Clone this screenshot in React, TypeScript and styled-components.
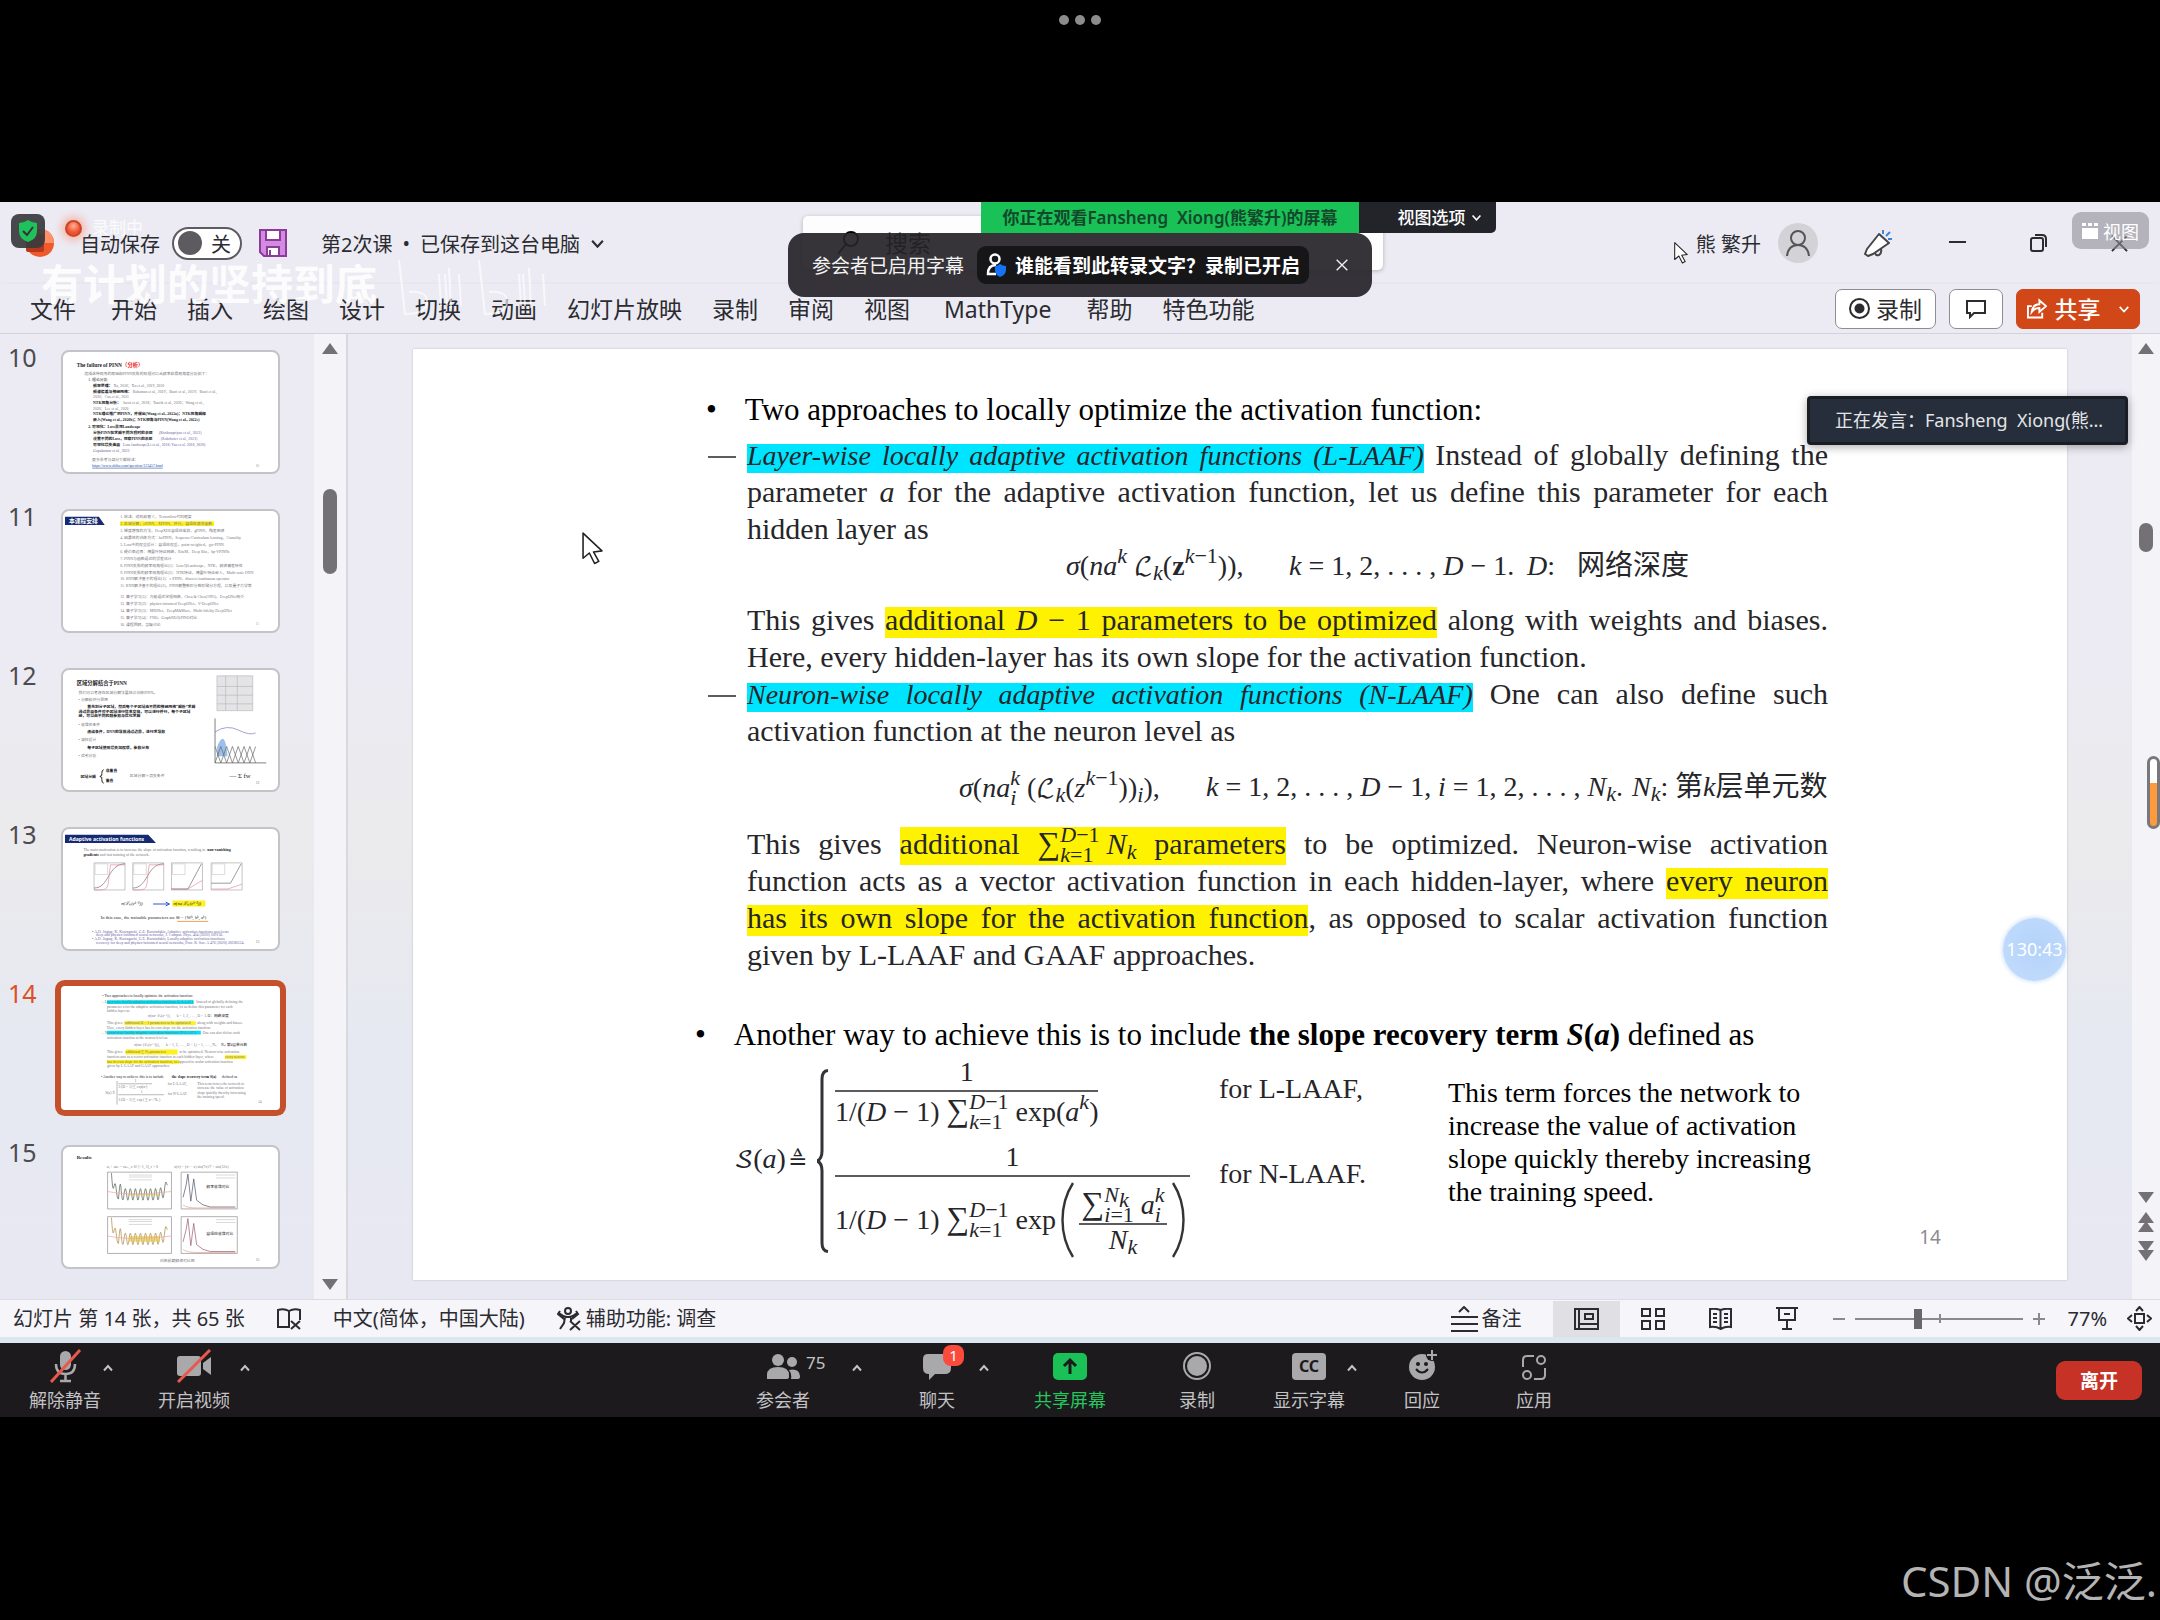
import React from "react";
import styled, { createGlobalStyle, css } from "styled-components";

const SANS = `"Noto Sans", "Noto Sans CJK SC", sans-serif`;
const SERIF = `"Liberation Serif", "Noto Sans CJK SC", serif`;
const INK = "#2b2b30";

const Global = createGlobalStyle`
  * { box-sizing: border-box; }
  body { margin: 0; background: #000; font-family: ${SANS}; color: ${INK}; }
  button { font: inherit; color: inherit; border: 0; padding: 0; background: none; cursor: pointer; }
  svg { display: block; }
`;

/* ---------- page shell ---------- */

const Screen = styled.main`
  position: relative;
  display: flex;
  flex-direction: column;
  min-height: 100vh;
  background: #000;
  overflow: hidden;
`;

const Notch = styled.div`
  display: flex;
  justify-content: center;
  gap: 6px;
  height: 202px;
  padding-top: 15px;
`;

const NotchDot = styled.i`
  width: 10px;
  height: 10px;
  border-radius: 50%;
  background: #8c8c8c;
`;

const Shared = styled.section`
  position: relative;
  display: flex;
  flex-direction: column;
  background: #ecebf4;
`;

/* ---------- title bar ---------- */

const TitleBar = styled.header`
  display: flex;
  align-items: center;
  height: 82px;
  padding: 0 32px 0 26px;
  font-size: 20px;
  white-space: nowrap;
`;

const AutoSave = styled.label`
  display: flex;
  align-items: center;
  gap: 12px;
  margin-left: 26px;
`;

const SwitchBox = styled.span`
  display: flex;
  align-items: center;
  justify-content: space-between;
  width: 70px;
  height: 33px;
  padding: 0 9px 0 4px;
  border: 2px solid #5d5b60;
  border-radius: 17px;
  background: #fff;
`;

const SwitchInput = styled.input`
  appearance: none;
  width: 24px;
  height: 24px;
  margin: 0;
  border-radius: 50%;
  background: #5d5b60;
`;

const SaveButton = styled.button`
  margin-left: 17px;
`;

const DocButton = styled.button`
  display: flex;
  align-items: center;
  gap: 10px;
  margin-left: 34px;
`;

const SearchBox = styled.label`
  display: flex;
  align-items: center;
  gap: 24px;
  width: 580px;
  height: 54px;
  margin-left: 198px;
  padding-left: 34px;
  border-radius: 5px;
  background: #fdfdfe;
  box-shadow: 0 1px 4px #00000040;
`;

const SearchInput = styled.input`
  flex: 1;
  min-width: 0;
  border: 0;
  background: none;
  font: 23px ${SANS};
  &::placeholder { color: #000; opacity: 1; }
`;

const WindowTools = styled.div`
  display: flex;
  align-items: center;
  margin-left: auto;
`;

const Avatar = styled.span`
  display: grid;
  place-items: center;
  width: 40px;
  height: 40px;
  margin: 0 46px 0 17px;
  border-radius: 50%;
  background: #d3d2d6;
`;

const WindowButtons = styled.div`
  display: flex;
  align-items: center;
  gap: 64px;
  margin-left: 57px;
`;

/* ---------- ribbon ---------- */

const Ribbon = styled.nav`
  display: flex;
  align-items: center;
  height: 50px;
  padding: 0 20px 0 30px;
  font-size: 23px;
  line-height: 30px;
  white-space: nowrap;
  border-bottom: 1px solid #d3d2da;
  box-shadow: 0 2px 6px #00000018;
`;

const Tabs = styled.div`
  display: flex;
  gap: 30px;
`;

const Tab = styled.button<{ $first?: boolean; $latin?: boolean }>`
  margin: 0 ${(p) => (p.$first || p.$latin ? 5 : 0)}px 0 ${(p) => (p.$latin ? 4 : 0)}px;
`;

const RibbonActions = styled.div`
  display: flex;
  gap: 13px;
  margin-left: auto;
`;

const RibbonButton = styled.button<{ $share?: boolean }>`
  display: flex;
  align-items: center;
  justify-content: center;
  gap: ${(p) => (p.$share ? 8 : 6)}px;
  width: ${(p) => (p.$share ? 124 : 101)}px;
  height: 40px;
  border: 1px solid ${(p) => (p.$share ? "#d24718" : "#8f8d93")};
  border-radius: 7px;
  color: ${(p) => (p.$share ? "#fff" : INK)};
  background: ${(p) => (p.$share ? "#d24718" : "#fff")};
  font-weight: ${(p) => (p.$share ? 500 : 400)};
`;

const CommentButton = styled(RibbonButton)`
  width: 54px;
`;

const ShareCaret = styled.span`
  margin-left: 9px;
`;

/* ---------- floating meeting overlays ---------- */

const Viewing = styled.div`
  position: absolute;
  top: 0;
  left: calc(50% - 99px);
  display: flex;
  height: 31px;
  font-size: 17px;
  line-height: 31px;
  white-space: nowrap;
`;

const ViewingName = styled.div`
  width: 378px;
  text-align: center;
  color: #14482b;
  font-weight: 600;
  background: #19c157;
`;

const ViewingOptions = styled.button`
  display: flex;
  align-items: center;
  justify-content: center;
  gap: 5px;
  width: 137px;
  padding-left: 24px;
  border-radius: 0 0 5px 0;
  color: #fff;
  font-weight: 500;
  background: #23242a;
`;

const Toast = styled.div`
  position: absolute;
  top: 31px;
  left: 50%;
  display: flex;
  align-items: center;
  width: 584px;
  height: 64px;
  padding: 0 24px;
  border-radius: 16px;
  color: #f2f2f2;
  background: #262429ec;
  font-size: 19px;
  white-space: nowrap;
  transform: translateX(-50%);
`;

const ToastPill = styled.button`
  display: flex;
  align-items: center;
  gap: 9px;
  height: 38px;
  margin-left: 13px;
  padding: 0 9px;
  border-radius: 9px;
  background: #161618;
  color: #fff;
  font-weight: 700;
`;

const ToastClose = styled.button`
  margin-left: auto;
`;

const Shield = styled.div`
  position: absolute;
  top: 12px;
  left: 11px;
  display: grid;
  place-items: center;
  width: 34px;
  height: 34px;
  border-radius: 8px;
  background: #3c3b3fee;
`;

const Recording = styled.div`
  position: absolute;
  top: 16px;
  left: 65px;
  display: flex;
  align-items: center;
  gap: 10px;
  color: #ffffffd0;
  font-size: 17px;
  line-height: 20px;
`;

const RecordingLight = styled.i`
  width: 17px;
  height: 17px;
  border: 2px solid #c8452a;
  border-radius: 50%;
  background: radial-gradient(circle at 50% 30%, #ffb09a, #f0512e 60%);
  box-shadow: 0 0 8px 3px #ff8e6a99;
`;

const Motto = styled.div`
  position: absolute;
  top: 54px;
  left: 41px;
  display: flex;
  gap: 20px;
  color: #ffffffe0;
  font-size: 42px;
  font-weight: 700;
  line-height: 56px;
  pointer-events: none;
`;

const ViewBadge = styled.button`
  position: absolute;
  top: 10px;
  right: 11px;
  display: flex;
  align-items: center;
  gap: 5px;
  height: 37px;
  padding: 0 10px;
  border-radius: 9px;
  color: #fff;
  background: #8f8e9499;
  font-size: 18px;
`;

const Pointer = styled.div<{ $x: string; $y: number; $w: number }>`
  position: absolute;
  left: ${(p) => p.$x};
  top: ${(p) => p.$y}px;
  width: ${(p) => p.$w}px;
`;

const Speaking = styled.div`
  position: absolute;
  top: 194px;
  right: 32px;
  width: 321px;
  height: 49px;
  padding-left: 25px;
  border: 3px solid #1a1d23;
  border-radius: 4px;
  color: #e3e5e8;
  background: #262e3b;
  box-shadow: 0 2px 10px #0005;
  font-size: 18px;
  line-height: 43px;
  white-space: pre;
`;

const Timer = styled.div`
  position: absolute;
  top: 716px;
  right: 94px;
  width: 63px;
  height: 63px;
  border-radius: 50%;
  color: #fff;
  background: radial-gradient(circle at 55% 45%, #b4d2fa, #c3ddfc);
  box-shadow: 0 0 5px #b9d4f7;
  font-size: 18px;
  line-height: 62px;
  text-align: center;
`;

const EdgeHandle = styled.div`
  position: absolute;
  top: 554px;
  right: 0;
  width: 13px;
  height: 73px;
  border: 3px solid #77777c;
  border-radius: 8px;
  background: linear-gradient(#fff 36%, #fc9a3f 36%);
`;

/* ---------- workspace ---------- */

const Workspace = styled.div`
  display: flex;
  height: 965px;
  background: linear-gradient(#ecebf4, #ecebf3 35%, #ebeaec 52%, #e6e9f2 75%, #e8e8f2);
`;

const ThumbList = styled.ol`
  display: flex;
  flex-direction: column;
  gap: 35px;
  width: 314px;
  margin: 0;
  padding: 16px 0 0 8px;
  list-style: none;
  overflow: hidden;
`;

const ThumbItem = styled.li<{ $active?: boolean }>`
  display: flex;
  color: ${(p) => (p.$active ? "#dd4f27" : "#4c4b50")};
  font-size: 25px;
  line-height: 14px;
`;

const ThumbNumber = styled.span`
  width: 53px;
`;

const ThumbButton = styled.button<{ $active?: boolean }>`
  width: 219px;
  height: 124px;
  border: 2px solid #c4c3c8;
  border-radius: 8px;
  background: #fff;
  overflow: hidden;
  ${(p) =>
    p.$active &&
    css`
      border-color: #fff;
      border-radius: 4px;
      box-shadow: 0 0 0 6px #c5502c;
    `}
  svg { width: 100%; height: 100%; }
`;

const Track = styled.div<{ $wide?: boolean }>`
  display: flex;
  flex-direction: column;
  align-items: center;
  width: ${(p) => (p.$wide ? 34 : 28)}px;
  padding: 9px 0 ${(p) => (p.$wide ? 9 : 38)}px;
  background: #f4f3f8;
  border-right: ${(p) => (p.$wide ? "2px solid #d9d8de" : "0")};
`;

const TrackThumb = styled.div<{ $top: number; $h: number }>`
  width: 14px;
  height: ${(p) => p.$h}px;
  margin-top: ${(p) => p.$top}px;
  border-radius: 7px;
  background: #737176;
`;

const TrackEnd = styled.div`
  display: flex;
  flex-direction: column;
  gap: 9px;
  margin-top: auto;
`;

const Stage = styled.div`
  flex: 1;
  min-width: 0;
  padding: 15px 65px 19px;
`;

/* ---------- the slide ---------- */

const SlideSheet = styled.article`
  min-height: 931px;
  padding: 42px 0 0 288px;
  color: #26262a;
  background: #fff;
  box-shadow: 0 0 2px #0003;
  font-family: ${SERIF};
  font-size: 28px;
  line-height: 37px;
  white-space: nowrap;
`;

const Bullet = styled.h2<{ $second?: boolean }>`
  display: flex;
  gap: 28px;
  margin: ${(p) => (p.$second ? "43px 0 0 -6px" : "0 0 8px 5px")};
  color: #000;
  font-size: 31px;
  font-weight: 400;
  &::before { content: "•"; }
`;

const Block = styled.div<{ $before?: number }>`
  margin: ${(p) => p.$before ?? 0}px 239px 0 46px;
  font-size: 30px;
`;

const Line = styled.p<{ $dash?: boolean; $end?: boolean }>`
  position: relative;
  height: 37px;
  margin: 0;
  text-align-last: ${(p) => (p.$end ? "left" : "justify")};
  ${(p) =>
    p.$dash &&
    css`
      &::before {
        content: "";
        position: absolute;
        left: -39px;
        top: 20px;
        width: 28px;
        height: 2px;
        background: #5c5c60;
      }
    `}
`;

const Mark = styled.mark<{ $blue?: boolean; $tall?: boolean }>`
  padding-bottom: ${(p) => (p.$tall ? 5 : 2)}px;
  color: inherit;
  font-size: ${(p) => (p.$blue ? 28 : 30)}px;
  font-style: ${(p) => (p.$blue ? "italic" : "normal")};
  background: linear-gradient(
    transparent ${(p) => (p.$tall ? 0 : 4)}px,
    ${(p) => (p.$blue ? "#00e5ff" : "#fff200")} ${(p) => (p.$tall ? 0 : 4)}px
  );
`;

const Formula = styled.div<{ $cols: string; $left: number; $before?: number }>`
  display: grid;
  grid-template-columns: ${(p) => p.$cols};
  height: 37px;
  margin: ${(p) => p.$before ?? 0}px 0 0 ${(p) => p.$left}px;
`;

const Sup = styled.sup`
  font-size: 22px;
  line-height: 0;
  vertical-align: 12px;
`;

const Sub = styled.sub`
  font-size: 22px;
  font-style: italic;
  line-height: 0;
  vertical-align: -5px;
`;

const Limits = styled.span<{ $gap?: boolean }>`
  display: inline-grid;
  margin-right: ${(p) => (p.$gap ? 7 : 0)}px;
  font-size: 22px;
  line-height: 20px;
  text-align-last: left;
  vertical-align: 12px;
`;

const Sigma = styled.span`
  font-size: 32px;
  line-height: 0;
`;

const Script = styled.span`
  font-family: "DejaVu Math TeX Gyre", "DejaVu Serif", serif;
  font-size: 25px;
  line-height: 0;
`;

const Cases = styled.div`
  display: grid;
  grid-template-columns: 83px 18px 384px 229px auto;
  margin-left: 33px;
`;

const CasesName = styled.div`
  align-self: center;
`;

const Equals = styled(Script)`
  margin-left: 3px;
  font-size: 23px;
`;

const Brace = styled.svg`
  width: 12px;
  height: 184px;
  margin-top: 16px;
`;

const CasesBody = styled.div`
  display: flex;
  flex-direction: column;
  align-items: flex-start;
  gap: 6px;
`;

const Fraction = styled.div<{ $inner?: boolean }>`
  display: flex;
  flex-direction: column;
  min-width: ${(p) => (p.$inner ? 88 : 0)}px;
  text-align: center;
  line-height: ${(p) => (p.$inner ? 30 : 37)}px;
`;

const Denominator = styled.div<{ $tall?: boolean }>`
  display: flex;
  align-items: center;
  height: ${(p) => (p.$tall ? 88 : 42)}px;
  border-top: 2px solid #5c5c60;
`;

const InnerTop = styled.div`
  height: 40px;
  line-height: 36px;
  border-bottom: 2px solid #5c5c60;
`;

const Paren = styled.svg`
  width: 13px;
  height: 76px;
  margin: 0 5px;
`;

const Conditions = styled.div`
  display: flex;
  flex-direction: column;
  gap: 48px;
  padding-top: 17px;
`;

const Note = styled.p`
  margin: 23px 0 0;
  color: #000;
  line-height: 33px;
`;

const PageNumber = styled.div`
  position: absolute;
  top: 1022px;
  right: 219px;
  color: #8b8b8f;
  font-size: 19px;
  line-height: 26px;
`;

/* ---------- status bar ---------- */

const StatusBar = styled.footer`
  display: flex;
  align-items: center;
  height: 44px;
  padding: 0 8px 0 13px;
  border-top: 1px solid #dcdbe2;
  border-bottom: 6px solid #dbe6f0;
  background: #f6f5fa;
  font-size: 20px;
  line-height: 28px;
  white-space: nowrap;
`;

const StatusGroup = styled.div`
  display: flex;
  align-items: center;
  gap: 32px;
`;

const IconLabel = styled.button<{ $notes?: boolean }>`
  display: flex;
  align-items: center;
  gap: 4px;
  margin-right: ${(p) => (p.$notes ? 31 : 0)}px;
`;

const StatusRight = styled.div`
  display: flex;
  align-items: center;
  margin-left: auto;
`;

const ViewButton = styled.button<{ $on?: boolean }>`
  display: grid;
  place-items: center;
  width: 67px;
  height: 36px;
  background: ${(p) => (p.$on ? "#e0dfe4" : "none")};
`;

const ZoomControl = styled.div`
  display: flex;
  align-items: center;
  gap: 10px;
  margin-left: 12px;
  color: #8a898f;
`;

const ZoomSlider = styled.input`
  appearance: none;
  width: 168px;
  height: 20px;
  margin: 0;
  background:
    linear-gradient(#8a898f, #8a898f) 84px 50% / 2px 9px no-repeat,
    linear-gradient(#8a898f, #8a898f) 0 50% / 100% 2px no-repeat;
  &::-webkit-slider-thumb {
    appearance: none;
    width: 8px;
    height: 20px;
    background: #68676c;
  }
`;

const ZoomValue = styled.span`
  margin: 0 20px 0 23px;
`;

/* ---------- meeting toolbar ---------- */

const MeetingBar = styled.nav`
  display: flex;
  align-items: center;
  justify-content: space-between;
  height: 74px;
  padding: 1px 18px 0 29px;
  color: #c3c2c5;
  background: #1c1a1d;
  font-size: 18px;
  line-height: 24px;
  white-space: nowrap;
`;

const MeetingLeft = styled.div`
  display: flex;
  gap: 43px;
`;

const MeetingCenter = styled.div`
  display: grid;
  grid-template-columns: 163px 115px 145px 94px 131px 112px auto;
`;

const Tool = styled.div`
  display: flex;
  align-items: flex-start;
`;

const ToolButton = styled.button<{ $green?: boolean }>`
  position: relative;
  display: flex;
  flex-direction: column;
  align-items: center;
  gap: 5px;
  color: ${(p) => (p.$green ? "#23c55e" : "inherit")};
  svg { height: 34px; }
`;

const Caret = styled.button<{ $gap: number }>`
  margin: 12px 0 0 ${(p) => p.$gap}px;
`;

const Count = styled.span`
  position: absolute;
  top: 2px;
  left: 50px;
  font-size: 17px;
`;

const Unread = styled.span`
  position: absolute;
  top: -4px;
  left: 24px;
  width: 21px;
  height: 21px;
  border-radius: 8px;
  color: #fff;
  background: #fb4b3c;
  font-size: 15px;
  line-height: 21px;
`;

const Leave = styled.button`
  width: 86px;
  height: 39px;
  border-radius: 9px;
  color: #fff;
  background: #c63225;
  font-size: 19px;
  font-weight: 700;
`;

const Watermark = styled.div`
  margin: auto 3px 9px auto;
  color: #b4b4b4;
  font-size: 42px;
  line-height: 60px;
`;

/* ---------- small drawings ---------- */

const Chevron = ({ up, w = 14, sw = 2 }: { up?: boolean; w?: number; sw?: number }) => (
  <svg width={w} height={w} viewBox="0 0 14 14" fill="none" stroke="currentColor" strokeWidth={sw}>
    <path d={up ? "M3 9.5 7 5l4 4.5" : "M2 4.5 7 10l5-5.5"} />
  </svg>
);

const Cross = ({ size }: { size: number }) => (
  <svg width={size} height={size} viewBox="0 0 18 18" stroke="currentColor" strokeWidth="2">
    <path d="M1 1l16 16M17 1 1 17" />
  </svg>
);

const Arrow = ({ down, double }: { down?: boolean; double?: boolean }) => (
  <svg width="16" height={double ? 20 : 12} viewBox={double ? "0 0 16 20" : "0 0 16 12"} fill="#737176">
    <g transform={down ? `rotate(180 8 ${double ? 10 : 6})` : undefined}>
      <path d="M8 0 16 11H0z" />
      {double && <path d="M8 9 16 20H0z" />}
    </g>
  </svg>
);

const CursorArrow = () => (
  <svg viewBox="0 0 20 32" fill="#fff" stroke="#222" strokeWidth="1.5" strokeLinejoin="round">
    <path d="M1 1v24l6-5 5 10 4-2-5-9 8-1z" />
  </svg>
);

const ParenShape = ({ right }: { right?: boolean }) => (
  <Paren viewBox="0 0 13 76" fill="none" stroke="#333338" strokeWidth="2.4">
    <path d={right ? "M1 1c14 22 14 52 0 74" : "M12 1c-14 22-14 52 0 74"} />
  </Paren>
);

/* ---------- thumbnails ---------- */

type Row = [number, number, string, string?, boolean?];

const Rows = ({ rows, size }: { rows: Row[]; size: number }) => (
  <g fontSize={size}>
    {rows.map(([x, y, text, fill = "#77757c", bold], i) => (
      <text key={i} x={x} y={y} fill={fill} fontWeight={bold ? 700 : 400}>
        {text}
      </text>
    ))}
  </g>
);

const K = "#222226";
const L = "#6a63a0";

const rows10: Row[] = [
  [20, 24, "造成这种现象的原因和PINN失败的机理可以从频率和景观角度分析如下："],
  [24, 30, "1. 理论分析", K],
  [29, 36, "频率原理：", K, true], [50, 36, "Xu, 2018；Xu et al., 2019, 2020"],
  [29, 42, "频谱偏差与神经网络：", K, true], [70, 42, "Rahaman et al., 2019；Basri et al., 2019；Basri et al.,"],
  [29, 48, "2020；Cao et al., 2021"],
  [29, 54, "NTK视角分析：", K, true], [60, 54, "Jacot et al., 2018；Tancik et al., 2020；Wang et al.,"],
  [29, 60, "2020；Lee et al., 2020"],
  [29, 65, "NTK理论推广到PINN，并提出(Wang et al., 2022a)；NTK视角解释", K, true],
  [29, 71, "嵌入(Wang et al., 2020b)；NTK视角与PINN(Wang et al., 2022c)", K, true],
  [24, 79, "2. 可视化：Loss景观Landscape", K, true],
  [29, 85, "分析PINN在求解不同方程时的表现", K, true], [97, 85, "(Krishnapriyan et al., 2021)", L],
  [29, 91, "设置不同的Loss，观察PINN的表现", K, true], [99, 91, "(Rohrhofer et al., 2021)", L],
  [29, 97, "可视化损失曲面", K, true], [60, 97, "Loss landscape(Li et al., 2018; Yao et al. 2018, 2020)", L],
  [29, 103, "Gopakumar et al., 2022", L],
  [28, 113, "更多参考与部分文献综述："],
  [28, 119, "https://www.zhihu.com/question/123457.html", "#2450a8"],
];

const rows11: Row[] = [
  "1. 综述，动机和意义，Tensorflow代码框架", "2. 区域分解，cPINN，XPINN，并行，自适应激活函数",
  "3. 梯度增强的方法，DeepXDE自适应采样，gPINN，残差图谱", "4. 因果性的训练方式：bcPINN，Sequence/Curriculum learning，Causality",
  "5. Loss中的权重设计：自适应权重，point-weighted，gw-PINN", "6. 硬约束边界：傅里叶特征网络，RitzM，Deep Ritz，hp-VPINNs",
  "7. PINN与函数逼近的误差估计", "8. PINN失败的频率视角理论(1)：Loss与Landscape，NTK，频谱偏差特性",
  "9. PINN失败的频率视角理论(2)：NTK特征，傅里叶特征嵌入，Multi-scale DNN", "10. RNN解决基于的理论(1)：e-PINN，discrete/continuous operator",
  "11. RNN解决基于的理论(2)，PINN解整数阶分数阶微分方程，以及量子力学等",
].map((t, i) => [57, 7 + i * 7.2, t] as Row).concat(
  ["12. 算子学习(1)：万能逼近定理网络，Chen & Chen(1995)，DeepONet简介", "13. 算子学习(2)：physics-informed DeepONet，V-DeepONet",
    "14. 算子学习(3)：MIONet，DeepM&Mnet，Multi-fidelity DeepONet", "15. 算子学习(4)：FNO，GraphNO与PINO对比", "16. 课程回顾，答疑讨论"]
    .map((t, i) => [57, 90 + i * 7.2, t] as Row)
);

const wave = (x: number, y: number) => {
  let d = `M${x} ${y - 22}`;
  for (let i = 1; i <= 120; i++) {
    const t = i / 120;
    const edge = Math.exp(-t * 22) * -22 + Math.exp(-(1 - t) * 22) * -14;
    d += `L${(x + t * 58).toFixed(1)} ${(y + edge + Math.sin(t * 70) * (t > 0.12 && t < 0.18 ? 10 : 6)).toFixed(1)}`;
  }
  return d;
};

const Thumb10 = () => (
  <svg viewBox="0 0 218 124" fontFamily={SERIF}>
    <text x="12" y="15" fontSize="5.5" fontWeight="700" fill={K}>The failure of PINN</text>
    <text x="59" y="15" fontSize="5.5" fontWeight="700" fill="#f01818">（分析）</text>
    <Rows rows={rows10} size={4} />
    <path d="M28 120h73" stroke="#2450a8" strokeWidth=".6" />
    <text x="197" y="119" fontSize="3.5" fill="#999">10</text>
  </svg>
);

const Thumb11 = () => (
  <svg viewBox="0 0 218 124" fontFamily={SERIF}>
    <path d="M0 6h35l6 8.500H0z" fill="#142a72" />
    <text x="4" y="12.500" fontSize="6" fontWeight="700" fill="#fff">本课程安排</text>
    <path d="M57 10.500h97v5H57z" fill="#fdf01c" />
    <Rows rows={rows11} size={4} />
    <text x="197" y="118" fontSize="3.5" fill="#999">11</text>
  </svg>
);

const Thumb12 = () => (
  <svg viewBox="0 0 218 124" fontFamily={SERIF}>
    <text x="12" y="15" fontSize="5.5" fontWeight="700" fill={K}>区域分解结合于PINN</text>
    <Rows
      size={4}
      rows={[
        [14, 24.5, "我们可以考虑在区域分解法里结合训练PINN。"],
        [14, 32, "•   分解和并行思想"],
        [23, 39, "首先划分子区域，然后每个子区域由不同的神经网络“解析”求解", K, true],
        [14, 44, "通过界面条件对子区域进行信息交换，可以进行并行，每个子区域", K, true],
        [14, 49, "经，可以由不同的超参数与优化求解", K, true],
        [14, 57.5, "•   收敛性条件"],
        [23, 65.5, "连续条件，DNN的导数通过边界，进行求导数", K, true],
        [14, 73.5, "•   减轻设计"],
        [23, 81.5, "每子区域使用损失加权项，参数分布", K, true],
        [14, 89.5, "•   优劣分析"],
        [16, 112, "区域分解", K, true], [42, 105, "非重叠", K, true], [42, 116, "重叠", K, true],
        [67, 111, "区域分解＋损失条件"], [197, 118, "12"],
      ]}
    />
    <path d="M40 103q-2 0-2 4v2l-2 1 2 1v2q0 4 2 4" fill="none" stroke={K} />
    <g fill="#e4e4e6" stroke="#b3b3b8" strokeWidth=".6">
      <path d="M157 6h37v36h-37z" />
      <path d="M157 17h37M157 26h37M157 35h37M166 6v36M178 6v36" />
    </g>
    <path d="M157 80q3-9 6-9t5 18h-11z" fill="#9cc0ec" />
    <g fill="none" strokeWidth=".7">
      <path d="M155 50v46h53" stroke="#444" />
      <path d="M155 64q12-8 24-2t18 3" stroke="#7474c8" />
      <path d="M155 96l6-17 6 17 6-17 6 17 6-17 6 17 6-17M155 79l6 17 6-17 6 17 6-17 6 17 6-17 6 17" stroke="#666" />
    </g>
    <text x="170" y="112" fontSize="7" fill={K}>— Σ fw</text>
  </svg>
);

const Thumb13 = () => (
  <svg viewBox="0 0 218 124" fontFamily={SERIF}>
    <path d="M0 6h86l8 8.500H0z" fill="#142a72" />
    <text x="4" y="12.200" fontSize="5.300" fontWeight="700" fill="#fff" fontFamily={SANS}>Adaptive activation functions</text>
    <Rows
      size={4}
      rows={[
        [19, 23, "The main motivation is to increase the slope of activation function, resulting in"],
        [147, 23, "non-vanishing", K, true], [19, 28, "gradients", K, true], [36, 28, "and fast training of the network."],
        [28, 107, "•   A.D. Jagtap, K. Kawaguchi, G.E. Karniadakis, Adaptive activation functions accelerate", L],
        [32, 111, "deep and physics-informed neural networks, J. Comput. Phys. 404 (2020) 109136.", L],
        [28, 115, "•   A.D. Jagtap, K. Kawaguchi, G.E. Karniadakis, Locally adaptive activation functions", L],
        [32, 119, "recovery for deep and physics-informed neural networks, Proc. R. Soc. A 476 (2020) 20200334.", L],
        [197, 118, "13"],
      ]}
    />
    <text x="37" y="93" fontSize="4.800" fill={K}>In this case, the trainable parameters are  Θ = {"{Wᵏ, bᵏ, aᵏ}"}</text>
    {[30, 70, 110, 151].map((x, i) => (
      <g key={x} fill="none" strokeWidth=".6">
        <path d={`M${x} 35h32v28h-32z`} stroke="#9a9aa0" />
        <path d={`M${x + 1} 36h13v11h-13z`} stroke="#c2c2c8" />
        {i < 2 ? (
          <>
            <path d={`M${x} 61c16 0 14-25 32-25`} stroke="#555" />
            <path d={`M${x} 63c18 0 13 0 17-26h15`} stroke="#e0798a" />
          </>
        ) : (
          <>
            <path d={`M${x} ${i === 2 ? 62 : 56}h${i === 2 ? 17 : 20}L${x + 31} 36`} stroke="#555" />
            <path d={`M${x} 62h17l15-${i === 2 ? 9 : 5}`} stroke="#e0798a" />
          </>
        )}
      </g>
    ))}
    <path d="M111 74h34v6h-34z" fill="#fdf01c" />
    <text x="58" y="79" fontSize="5" fontStyle="italic" fill={K}>σ(ℒₖ(zᵏ⁻¹))</text>
    <path d="M91 77.500h16m-3-2 4 2-4 2" stroke="#2b50d8" fill="none" />
    <text x="112" y="79" fontSize="5" fontStyle="italic" fill={K}>σ(na ℒₖ(zᵏ⁻¹))</text>
    <path d="M116 95.500h32" stroke="#f0a050" />
  </svg>
);

const Thumb14 = () => (
  <svg viewBox="413 349 1654 931" fontFamily={SERIF}>
    <path d="M747 444h673v29H747zM747 680h728v29H747z" fill="#00e0f4" />
    <path d="M881 607h555v30H881zM891 827h403v38H891zM1662 870h166v29h-166zM747 907h562v29H747z" fill="#fdf01c" />
    <Rows
      size={29}
      rows={[
        [711, 419, "•  Two approaches to locally optimize the activation function:", K],
        [708, 465, "– Layer-wise locally adaptive activation functions (L-LAAF)"],
        [1440, 465, "Instead of globally defining the"],
        [747, 502, "parameter a for the adaptive activation function, let us define this parameter for each"],
        [747, 539, "hidden layer as"],
        [1066, 576, "σ(naᵏ ℒₖ(zᵏ⁻¹)),"], [1289, 576, "k = 1, 2, . . . , D − 1."], [1527, 576, "D：网络深度", K],
        [747, 630, "This gives"], [885, 630, "additional D − 1 parameters to be optimized"], [1447, 630, "along with weights and biases."],
        [747, 667, "Here, every hidden-layer has its own slope for the activation function."],
        [708, 704, "– Neuron-wise locally adaptive activation functions (N-LAAF)"],
        [1490, 704, "One can also define such"],
        [747, 741, "activation function at the neuron level as"],
        [959, 797, "σ(naᵏ (ℒₖ(zᵏ⁻¹))ᵢ),"], [1206, 797, "k = 1, 2, . . . , D − 1, "], [1438, 797, "i = 1, . . . , Nₖ."],
        [1632, 797, "Nₖ: 第k层单元数", K],
        [747, 854, "This gives"], [891, 854, "additional  ∑  Nₖ  parameters"], [1309, 854, "to be optimized. Neuron-wise activation"],
        [747, 891, "function acts as a vector activation function in each hidden-layer, where"], [1662, 891, "every neuron"],
        [747, 928, "has its own slope for the activation function, as opposed to scalar activation function"],
        [747, 965, "given by L-LAAF and GAAF approaches."],
        [701, 1046, "•  Another way to achieve this is to include", K],
        [1250, 1046, "the slope recovery term S(a)", K, true], [1640, 1046, "defined as", K],
        [960, 1082, "1"], [835, 1122, "1/(D − 1) ∑ exp(aᵏ)"], [1219, 1098, "for L-LAAF,"], [734, 1168, "S(a) ≜"],
        [1010, 1166, "1"], [835, 1228, "1/(D − 1) ∑ exp ( ∑ aᵏ / Nₖ )"], [1219, 1183, "for N-LAAF."],
        [1448, 1102, "This term forces the network to"], [1448, 1135, "increase the value of activation"],
        [1448, 1168, "slope quickly thereby increasing"], [1448, 1201, "the training speed."], [1919, 1245, "14"],
      ]}
    />
    <path d="M825 1070v184M835 1092h262M835 1177h355" stroke="#777" strokeWidth="4" />
  </svg>
);

const Thumb15 = () => (
  <svg viewBox="0 0 218 124" fontFamily={SERIF}>
    <text x="12" y="12.500" fontSize="5" fontWeight="700" fill={K}>Results</text>
    <Rows
      size={4}
      rows={[
        [43, 22, "uₜ + uuₓ = νuₓₓ,  x ∈ [−1, 1],  t > 0"],
        [113, 22, "u(x) = (x³ − x) sin(7x)/7 + sin(12x)"],
        [146, 42, "频率收敛对比", K], [146, 91, "自适应收敛对比", K], [98, 119, "训练前期频谱对比图"], [197, 118, "15"],
      ]}
    />
    {[26, 72].map((y, i) => (
      <g key={y} fill="none" strokeWidth=".7">
        <path d={`M44 ${y}h66v38H44zM120 ${y}h58v38h-58z`} stroke="#8c8c92" />
        <path d={`M66 ${y + 3}h24M66 ${y + 5}h24M66 ${y + 8}h24M156 ${y + 3}h20M156 ${y + 6}h20`} stroke="#c8c8cc" />
        <path d={wave(48, y + 23)} stroke={i ? "#a8843c" : "#4a5a48"} />
        <path d={`M66 ${y + 23}h32`} stroke="#e0c020" strokeWidth={i ? 6 : 1.5} opacity=".5" />
        <path d={`M44 ${y + 20}q22 5 66 0`} stroke="#f0a0a0" />
        <path
          d={`M122 ${y + 26}l3-12 2-12 3 28 3-23 3 22q6 6 14 7h26`}
          stroke={i ? "#94566a" : "#4a4a66"}
        />
        <path d={`M122 ${y + 34}q4 3 14 3h40`} stroke="#e89a8a" />
      </g>
    ))}
  </svg>
);

const thumbs: [number, () => React.JSX.Element][] = [
  [10, Thumb10],
  [11, Thumb11],
  [12, Thumb12],
  [13, Thumb13],
  [14, Thumb14],
  [15, Thumb15],
];

const tabs = ["文件", "开始", "插入", "绘图", "设计", "切换", "动画", "幻灯片放映", "录制", "审阅", "视图", "MathType", "帮助", "特色功能"];

/* ---------- sections ---------- */

const SumLimits = ({ top, bottom, gap }: { top: React.ReactNode; bottom: React.ReactNode; gap?: boolean }) => (
  <>
    <Sigma>∑</Sigma>
    <Limits $gap={gap}>
      <span>{top}</span>
      <span>{bottom}</span>
    </Limits>
  </>
);

const outerSum = <SumLimits gap top={<><i>D</i>−1</>} bottom={<><i>k</i>=1</>} />;

const Slide = () => (
  <SlideSheet>
    <Bullet>Two approaches to locally optimize the activation function:</Bullet>
    <Block>
      <Line $dash>
        <Mark $blue>Layer-wise locally adaptive activation functions (L-LAAF)</Mark> Instead of globally defining the
      </Line>
      <Line>
        parameter <i>a</i> for the adaptive activation function, let us define this parameter for each
      </Line>
      <Line $end>hidden layer as</Line>
    </Block>
    <Formula $left={365} $cols="223px 238px 50px auto">
      <span>
        <i>σ</i>(<i>na<Sup>k</Sup></i> <Script>ℒ</Script><Sub>k</Sub>(<b>z</b><Sup><i>k</i>−1</Sup>)),
      </span>
      <span><i>k</i> = 1, 2, . . . , <i>D</i> − 1.</span>
      <span><i>D</i>:</span>
      <span>网络深度</span>
    </Formula>
    <Block $before={17}>
      <Line>
        This gives <Mark>additional <i>D</i> − 1 parameters to be optimized</Mark> along with weights and biases.
      </Line>
      <Line $end>Here, every hidden-layer has its own slope for the activation function.</Line>
      <Line $dash>
        <Mark $blue>Neuron-wise locally adaptive activation functions (N-LAAF)</Mark> One can also define such
      </Line>
      <Line $end>activation function at the neuron level as</Line>
    </Block>
    <Formula $left={258} $before={19} $cols="247px 232px 194px 43px auto">
      <span>
        <i>σ</i>(<i>na</i><Limits><i>k</i><i>i</i></Limits> (<Script>ℒ</Script><Sub>k</Sub>(<i>z</i><Sup><i>k</i>−1</Sup>))<Sub>i</Sub>),
      </span>
      <span><i>k</i> = 1, 2, . . . , <i>D</i> − 1,</span>
      <span><i>i</i> = 1, 2, . . . , <i>N</i><Sub>k</Sub>.</span>
      <span><i>N</i><Sub>k</Sub>:</span>
      <span>第<i>k</i>层单元数</span>
    </Formula>
    <Block $before={20}>
      <Line>
        This gives{" "}
        <Mark $tall>
          additional <SumLimits top={<><i>D</i>−1</>} bottom={<><i>k</i>=1</>} gap />
          <i>N</i><Sub>k</Sub> parameters
        </Mark>{" "}
        to be optimized. Neuron-wise activation
      </Line>
      <Line>
        function acts as a vector activation function in each hidden-layer, where <Mark>every neuron</Mark>
      </Line>
      <Line>
        <Mark>has its own slope for the activation function</Mark>, as opposed to scalar activation function
      </Line>
      <Line $end>given by L-LAAF and GAAF approaches.</Line>
    </Block>
    <Bullet $second>
      <span>
        Another way to achieve this is to include <b>the slope recovery term <i>S</i>(<i>a</i>)</b> defined as
      </span>
    </Bullet>
    <Cases>
      <CasesName>
        <Script>𝒮</Script>(<i>a</i>)<Equals>≜</Equals>
      </CasesName>
      <Brace viewBox="0 0 12 184" fill="none" stroke="#333338" strokeWidth="3">
        <path d="M11 1.500Q5 2 5 10v72q0 8-5 10 5 2 5 10v72q0 8 6 8.500" />
      </Brace>
      <CasesBody>
        <Fraction>
          <span>1</span>
          <Denominator>
            <span>1/(<i>D</i> − 1) {outerSum}exp(<i>a</i><Sup><i>k</i></Sup>)</span>
          </Denominator>
        </Fraction>
        <Fraction>
          <span>1</span>
          <Denominator $tall>
            <span>1/(<i>D</i> − 1) {outerSum}exp</span>
            <ParenShape />
            <Fraction $inner>
              <InnerTop>
                <SumLimits gap top={<><i>N</i><Sub>k</Sub></>} bottom={<><i>i</i>=1</>} />
                <i>a</i><Limits><i>k</i><i>i</i></Limits>
              </InnerTop>
              <span><i>N</i><Sub>k</Sub></span>
            </Fraction>
            <ParenShape right />
          </Denominator>
        </Fraction>
      </CasesBody>
      <Conditions>
        <span>for L-LAAF,</span>
        <span>for N-LAAF.</span>
      </Conditions>
      <Note>
        This term forces the network to<br />
        increase the value of activation<br />
        slope quickly thereby increasing<br />
        the training speed.
      </Note>
    </Cases>
  </SlideSheet>
);

const Title = () => (
  <TitleBar>
    <svg width="28" height="28" viewBox="0 0 28 28">
      <circle cx="14" cy="14" r="14" fill="#ee5a2c" />
      <path d="M14 0a14 14 0 0 1 14 14H14z" fill="#ff8f66" />
      <rect x="0" y="5" width="18" height="18" rx="2" fill="#b8371a" />
    </svg>
    <AutoSave>
      自动保存
      <SwitchBox>
        <SwitchInput type="checkbox" />关
      </SwitchBox>
    </AutoSave>
    <SaveButton aria-label="保存">
      <svg width="28" height="28" viewBox="0 0 28 28" fill="#d28be0" stroke="#8b3c9b" strokeWidth="2">
        <path d="M1 1h26v26H5l-4-4z" />
        <path d="M7 1h14v10H7zM8 18h12v9H8z" fill="#fff" />
        <path d="M11 21v6" />
      </svg>
    </SaveButton>
    <DocButton>
      <span>第2次课</span>
      <span>•</span>
      <span>已保存到这台电脑</span>
      <Chevron w={15} />
    </DocButton>
    <SearchBox>
      <svg width="22" height="24" viewBox="0 0 22 24" fill="none" stroke="#000" strokeWidth="2">
        <circle cx="14" cy="8" r="7" />
        <path d="M9 13 1 23" />
      </svg>
      <SearchInput placeholder="搜索" aria-label="搜索" />
    </SearchBox>
    <WindowTools>
      熊 繁升
      <Avatar>
        <svg width="24" height="26" viewBox="0 0 24 26" fill="none" stroke="#55545a" strokeWidth="2">
          <circle cx="12" cy="8" r="7" />
          <path d="M1 26c1-8 5-11 11-11s10 3 11 11" />
        </svg>
      </Avatar>
      <svg width="28" height="28" viewBox="0 0 28 28" fill="none" stroke="#444348" strokeWidth="2" strokeLinejoin="round">
        <path d="M15 5 3 20l-2 5 3 2 5-2 16-11z" fill="#fff" />
        <path d="M11 24q1 3 4 2 3-2 2-6" />
        <path d="M19 5V1M22 7l4-4M24 10h4" stroke="#3a86d8" />
      </svg>
      <WindowButtons>
        <svg width="17" height="18" viewBox="0 0 17 18" stroke={INK} strokeWidth="2"><path d="M0 8h17" /></svg>
        <svg width="17" height="18" viewBox="0 0 17 18" fill="none" stroke={INK} strokeWidth="2">
          <rect x="1" y="4" width="12" height="13" rx="2" />
          <path d="M5 1h7q4 0 4 4v8" />
        </svg>
        <Cross size={17} />
      </WindowButtons>
    </WindowTools>
  </TitleBar>
);

const RibbonBar = () => (
  <Ribbon>
    <Tabs>
      {tabs.map((t, i) => (
        <Tab key={t} $first={i === 0} $latin={t === "MathType"}>
          {t}
        </Tab>
      ))}
    </Tabs>
    <RibbonActions>
      <RibbonButton>
        <svg width="21" height="21" viewBox="0 0 21 21" fill="none" stroke={INK} strokeWidth="2">
          <circle cx="10.500" cy="10.500" r="9.500" />
          <circle cx="10.500" cy="10.500" r="5" fill={INK} stroke="none" />
        </svg>
        录制
      </RibbonButton>
      <CommentButton aria-label="批注">
        <svg width="20" height="20" viewBox="0 0 20 20" fill="none" stroke={INK} strokeWidth="2">
          <path d="M1 2h18v12H8l-4 4v-4H1z" />
        </svg>
      </CommentButton>
      <RibbonButton $share>
        <svg width="20" height="21" viewBox="0 0 21 21" fill="none" stroke="#fff" strokeWidth="2">
          <path d="M5 8H1v12h15v-5M5 14q1-8 8-8V2l7 6-7 6v-4q-5 0-8 4z" />
        </svg>
        共享
        <ShareCaret><Chevron w={12} /></ShareCaret>
      </RibbonButton>
    </RibbonActions>
  </Ribbon>
);

const Status = () => (
  <StatusBar>
    <StatusGroup>
      <span>幻灯片 第 14 张，共 65 张</span>
      <svg width="24" height="22" viewBox="0 0 24 22" fill="none" stroke={INK} strokeWidth="2">
        <path d="M12 3v17M12 3q-5-3-11-1v17h11M12 3q5-3 11-1v10M14 13l9 8M23 13l-9 8" />
      </svg>
      <span>中文(简体，中国大陆)</span>
      <IconLabel>
        <svg width="25" height="24" viewBox="0 0 25 24" fill="none" stroke={INK} strokeWidth="2">
          <circle cx="11" cy="4" r="3" />
          <path d="M2 6q4 4 9 4t9-4M8 10l-1 6-4 6M14 10v4M3 4 1 7l6 5M19 4l2 3-6 5M13 14l10 9M23 14l-10 9" />
        </svg>
        辅助功能: 调查
      </IconLabel>
    </StatusGroup>
    <StatusRight>
      <IconLabel $notes>
        <svg width="27" height="26" viewBox="0 0 27 26" fill="none" stroke={INK} strokeWidth="2">
          <path d="M8 6l5-5 5 5M0 11h27M0 18h27M0 25h27" />
        </svg>
        备注
      </IconLabel>
      <ViewButton $on aria-label="普通视图">
        <svg width="25" height="22" viewBox="0 0 25 22" fill="none" stroke={INK} strokeWidth="2">
          <path d="M1 1h23v20H1zM5 1v20M5 16h19M11 6h8v5h-8z" />
        </svg>
      </ViewButton>
      <ViewButton aria-label="幻灯片浏览">
        <svg width="25" height="22" viewBox="0 0 25 22" fill="none" stroke={INK} strokeWidth="2">
          <path d="M1 1h8v7H1zM15 1h8v7h-8zM1 13h8v8H1zM15 13h8v8h-8z" />
        </svg>
      </ViewButton>
      <ViewButton aria-label="阅读视图">
        <svg width="23" height="22" viewBox="0 0 23 22" fill="none" stroke={INK} strokeWidth="2">
          <path d="M11.500 2Q6 0 1 1v18q6-1 10.500 2Q17 18 22 19V1q-5-1-10.500 1zv18M4 6h4M4 10h4M4 14h4M15 6h4M15 10h4M15 14h4" />
        </svg>
      </ViewButton>
      <ViewButton aria-label="幻灯片放映">
        <svg width="22" height="23" viewBox="0 0 22 23" fill="none" stroke={INK} strokeWidth="2">
          <path d="M0 1h22M3 1v12h16V1M11 13v8M6 22h10M8 7h6" />
        </svg>
      </ViewButton>
      <ZoomControl>
        <svg width="12" height="12" viewBox="0 0 12 12" stroke="currentColor" strokeWidth="2"><path d="M0 6h12" /></svg>
        <ZoomSlider type="range" min={0} max={100} defaultValue={37} aria-label="缩放" />
        <svg width="12" height="12" viewBox="0 0 12 12" stroke="currentColor" strokeWidth="2"><path d="M0 6h12M6 0v12" /></svg>
      </ZoomControl>
      <ZoomValue>77%</ZoomValue>
      <svg width="25" height="25" viewBox="0 0 25 25" fill="none" stroke={INK} strokeWidth="2">
        <path d="M8 8h9v9H8zM9 5l3.500-4L16 5M9 20l3.500 4 3.500-4M5 9l-4 3.500L5 16M20 9l4 3.500-4 3.500" />
      </svg>
    </StatusRight>
  </StatusBar>
);

const G = "#a9a8ab";

const Meeting = () => (
  <MeetingBar>
    <MeetingLeft>
      <Tool>
        <ToolButton>
          <svg width="34" viewBox="0 0 34 34" fill="none" stroke={G} strokeWidth="2.500">
            <rect x="12" y="2" width="11" height="19" rx="5.500" fill={G} stroke="none" />
            <path d="M8 15q0 10 9.500 10T27 15M17.500 25v6M12 32h11" />
            <path d="M3 33 32 1" stroke="#e8584c" strokeWidth="3" />
          </svg>
          解除静音
        </ToolButton>
        <Caret $gap={0} aria-label="音频选项"><Chevron up /></Caret>
      </Tool>
      <Tool>
        <ToolButton>
          <svg width="36" viewBox="0 0 36 34" fill={G}>
            <rect x="1" y="7" width="24" height="20" rx="3" />
            <path d="m27 14 8-6v18l-8-6z" />
            <path d="M2 33 34 1" stroke="#e8584c" strokeWidth="3" />
          </svg>
          开启视频
        </ToolButton>
        <Caret $gap={8} aria-label="视频选项"><Chevron up /></Caret>
      </Tool>
    </MeetingLeft>
    <MeetingCenter>
      <Tool>
        <ToolButton>
          <svg width="34" viewBox="0 0 34 34" fill={G}>
            <circle cx="12" cy="11" r="6" />
            <path d="M1 30v-4q0-8 11-8t11 8v2q0 2-2 2z" />
            <circle cx="26" cy="13" r="5" />
            <path d="M25 30q1-5-2-9 10-2 11 6v1q0 2-2 2z" />
          </svg>
          <Count>75</Count>
          参会者
        </ToolButton>
        <Caret $gap={40} aria-label="参会者选项"><Chevron up /></Caret>
      </Tool>
      <Tool>
        <ToolButton>
          <svg width="32" viewBox="0 0 32 34" fill={G}>
            <path d="M7 5h18q5 0 5 5v9q0 6-6 6H14l-6 6v-6q-6 0-6-6v-9q0-5 5-5z" />
          </svg>
          <Unread>1</Unread>
          聊天
        </ToolButton>
        <Caret $gap={22} aria-label="聊天选项"><Chevron up /></Caret>
      </Tool>
      <Tool>
        <ToolButton $green>
          <svg width="34" viewBox="0 0 34 34">
            <rect x="0" y="4" width="34" height="27" rx="5" fill="#19c157" />
            <path d="M17 25V11m-6 6 6-6 6 6" fill="none" stroke="#1c1a1d" strokeWidth="3" />
          </svg>
          共享屏幕
        </ToolButton>
      </Tool>
      <Tool>
        <ToolButton>
          <svg width="30" viewBox="0 0 30 34" fill={G}>
            <circle cx="15" cy="17" r="13" fill="none" stroke={G} strokeWidth="2" />
            <circle cx="15" cy="17" r="10" />
          </svg>
          录制
        </ToolButton>
      </Tool>
      <Tool>
        <ToolButton>
          <svg width="34" viewBox="0 0 34 34">
            <rect x="0" y="4" width="34" height="27" rx="4" fill={G} />
            <text x="17" y="23" fontSize="16" fontWeight="700" fill="#1c1a1d" textAnchor="middle">CC</text>
          </svg>
          显示字幕
        </ToolButton>
        <Caret $gap={0} aria-label="字幕选项"><Chevron up /></Caret>
      </Tool>
      <Tool>
        <ToolButton>
          <svg width="34" viewBox="0 0 34 34" fill={G}>
            <circle cx="17" cy="18" r="13" />
            <circle cx="27" cy="6" r="6" fill="#1c1a1d" />
            <path d="M27 1v10M22 6h10" stroke={G} strokeWidth="2" />
            <g fill="#1c1a1d"><circle cx="13" cy="15" r="2" /><circle cx="21" cy="15" r="2" /></g>
            <path d="M11 20q6 7 12 0" fill="none" stroke="#1c1a1d" strokeWidth="2" />
          </svg>
          回应
        </ToolButton>
      </Tool>
      <Tool>
        <ToolButton>
          <svg width="28" viewBox="0 0 28 34" fill="none" stroke={G} strokeWidth="2">
            <path d="M14 7H7Q3 7 3 11v7M14 30h7q4 0 4-4v-7" />
            <circle cx="21" cy="11" r="4" />
            <circle cx="7" cy="26" r="4" />
          </svg>
          应用
        </ToolButton>
      </Tool>
    </MeetingCenter>
    <Leave>离开</Leave>
  </MeetingBar>
);

export default function App() {
  return (
    <Screen>
      <Global />
      <Notch>
        <NotchDot />
        <NotchDot />
        <NotchDot />
      </Notch>
      <Shared>
        <Title />
        <RibbonBar />
        <Workspace>
          <ThumbList>
            {thumbs.map(([n, Picture]) => (
              <ThumbItem key={n} $active={n === 14}>
                <ThumbNumber>{n}</ThumbNumber>
                <ThumbButton $active={n === 14} aria-label={`幻灯片 ${n}`}>
                  <Picture />
                </ThumbButton>
              </ThumbItem>
            ))}
          </ThumbList>
          <Track $wide>
            <Arrow />
            <TrackThumb $top={134} $h={85} />
            <TrackEnd><Arrow down /></TrackEnd>
          </Track>
          <Stage>
            <Slide />
          </Stage>
          <Track>
            <Arrow />
            <TrackThumb $top={168} $h={29} />
            <TrackEnd>
              <Arrow down />
              <Arrow double />
              <Arrow down double />
            </TrackEnd>
          </Track>
        </Workspace>
        <PageNumber>14</PageNumber>
        <Status />

        <Shield>
          <svg width="20" height="22" viewBox="0 0 20 22">
            <path d="M10 0q4 3 9 3v8q0 8-9 11Q1 19 1 11V3q5 0 9-3z" fill="#1fc15b" />
            <path d="m5 11 4 4 6-8" fill="none" stroke="#333" strokeWidth="2" />
          </svg>
        </Shield>
        <Recording>
          <RecordingLight />
          录制中
        </Recording>
        <Motto>
          有计划的坚持到底
          <svg width="156" height="64" viewBox="0 0 156 64" fill="none" stroke="#ffffffa0" strokeWidth="2">
            <path d="M2 4l6 54q22 0 22-12t-18-10M42 18l2 32M52 12l2 40M62 18l2 32M82 4l6 54q22 0 22-12t-18-10M122 18l2 32M132 12l2 40M146 18l2 32M48 18l2 32M126 18l2 32" />
          </svg>
        </Motto>
        <Viewing>
          <ViewingName>你正在观看Fansheng&nbsp; Xiong(熊繁升)的屏幕</ViewingName>
          <ViewingOptions>
            视图选项 <Chevron w={11} />
          </ViewingOptions>
        </Viewing>
        <Toast>
          参会者已启用字幕
          <ToastPill>
            <svg width="20" height="24" viewBox="0 0 20 24" fill="none" stroke="#fff" strokeWidth="2.500">
              <circle cx="9" cy="6" r="4.500" />
              <path d="M10 12q-8 0-8 9h8" />
              <path d="M14 11q3 2 6 2v4q0 5-6 7-5-2-5-7v-4q3 0 5-2z" fill="#1673f5" stroke="none" />
            </svg>
            谁能看到此转录文字？录制已开启
          </ToastPill>
          <ToastClose aria-label="关闭"><Cross size={12} /></ToastClose>
        </Toast>
        <ViewBadge>
          <svg width="16" height="16" viewBox="0 0 16 16" fill="#fff">
            <path d="M0 0h4v3H0zM6 0h4v3H6zM12 0h4v3h-4zM0 5h16v11H0z" />
          </svg>
          视图
        </ViewBadge>
        <Pointer $x="1674px" $y={40} $w={14}><CursorArrow /></Pointer>
        <Pointer $x="582px" $y={330} $w={21}><CursorArrow /></Pointer>
        <Speaking>正在发言：Fansheng  Xiong(熊...</Speaking>
        <Timer>130:43</Timer>
        <EdgeHandle />
      </Shared>
      <Meeting />
      <Watermark>CSDN @泛泛.</Watermark>
    </Screen>
  );
}
